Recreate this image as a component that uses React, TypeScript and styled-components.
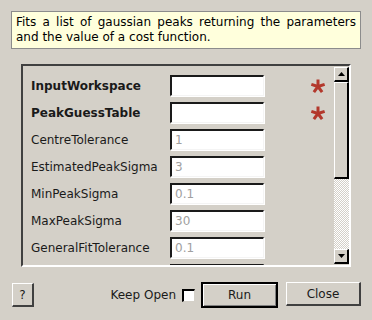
import React from 'react';
import styled, { createGlobalStyle } from 'styled-components';

const GlobalStyle = createGlobalStyle`
  html, body {
    margin: 0;
    padding: 0;
    background: #d4d0c8;
  }
  #root {
    width: 372px;
    height: 320px;
  }
`;

const Dialog = styled.div`
  width: 372px;
  height: 320px;
  box-sizing: border-box;
  padding: 11px 11px 0 11px;
  display: flex;
  flex-direction: column;
  background: #d4d0c8;
  font-family: 'DejaVu Sans', sans-serif;
  font-size: 12px;
  color: #000;
`;

const Description = styled.div`
  box-sizing: border-box;
  height: 38px;
  padding: 3px 4px 0 4px;
  background: #ffffdc;
  border: 1px solid #8c8c8c;
  line-height: 15px;
  text-align: justify;
  text-align-last: left;
`;

const ScrollFrame = styled.div`
  box-sizing: border-box;
  margin: 15px 0 0 10px;
  width: 330px;
  height: 203px;
  border-style: solid;
  border-width: 2px;
  border-color: #404040 #ffffff #ffffff #404040;
  box-shadow: inset -1px -1px 0 #d4d0c8;
  display: flex;
  overflow: hidden;
`;

const Content = styled.div`
  flex: 1;
  padding: 9px 0 0 8px;
  display: grid;
  grid-template-columns: 139px 94px 1fr;
  grid-auto-rows: 21px;
  row-gap: 6px;
  align-items: center;
  align-content: start;
  overflow: hidden;
`;

const Label = styled.div<{ $required?: boolean }>`
  font-weight: ${p => (p.$required ? 'bold' : 'normal')};
  color: #1a1a1a;
  white-space: nowrap;
`;

const Field = styled.div`
  box-sizing: border-box;
  height: 21px;
  background: #fff;
  border-style: solid;
  border-width: 2px 1px 1px 2px;
  border-color: #1a1a1a #f4f4f4 #f4f4f4 #1a1a1a;
  box-shadow: 1px 1px 0 #ffffff;
  padding-left: 3px;
  line-height: 18px;
  color: #a0a0a0;
`;

const Marker = styled.div`
  display: flex;
  justify-content: flex-end;
  padding-right: 8px;
  height: 21px;
  align-items: center;
`;

const ScrollBar = styled.div`
  width: 15px;
  margin: 1px 0 1px 0;
  display: flex;
  flex-direction: column;
`;

const ScrollButton = styled.div`
  box-sizing: border-box;
  height: 15px;
  background: #d4d0c8;
  border-style: solid;
  border-width: 1px 2px 2px 1px;
  border-color: #ffffff #000 #000 #ffffff;
  display: flex;
  align-items: center;
  justify-content: center;
`;

const Thumb = styled.div`
  box-sizing: border-box;
  height: 97px;
  background: #d4d0c8;
  border-style: solid;
  border-width: 1px 2px 2px 1px;
  border-color: #ffffff #000 #000 #ffffff;
`;

const Track = styled.div`
  flex: 1;
  background-color: #d4d0c8;
  background-image: repeating-conic-gradient(#ffffff 0 25%, #d4d0c8 0 50%);
  background-size: 2px 2px;
`;

const Footer = styled.div`
  margin-top: 15px;
  display: flex;
  align-items: center;
  height: 26px;
`;

const Button = styled.button<{ $default?: boolean; $w: number }>`
  box-sizing: border-box;
  width: ${p => p.$w}px;
  height: ${p => (p.$default ? 26 : 24)}px;
  background: #d4d0c8;
  font-family: 'DejaVu Sans', sans-serif;
  font-size: 12px;
  line-height: 14px;
  color: #1a1a1a;
  padding: 0;
  margin: 0;
  border-style: solid;
  border-width: ${p => (p.$default ? '2px' : '1px 2px 2px 1px')};
  border-color: ${p => (p.$default ? '#000' : '#ffffff #404040 #404040 #ffffff')};
  box-shadow: ${p => (p.$default ? 'inset 1px 1px 0 #fff, inset -1px -1px 0 #808080' : 'none')};
`;

const HelpButton = styled(Button)`
  margin-left: 1px;
`;

const KeepOpen = styled.label`
  margin-left: auto;
  display: flex;
  align-items: center;
  gap: 6px;
  color: #1a1a1a;
  line-height: 16px;
`;

const Check = styled.span`
  box-sizing: border-box;
  width: 13px;
  height: 13px;
  background: #fff;
  border-style: solid;
  border-width: 2px 1px 1px 2px;
  border-color: #000 #d4d0c8 #d4d0c8 #000;
`;

const Buttons = styled.div`
  display: flex;
  gap: 8px;
  margin-left: 6px;
`;

const Asterisk = () => (
  <svg width="16" height="16" viewBox="0 0 16 16">
    {[-90, -18, 54, 126, 198].map(a => {
      const r = (a * Math.PI) / 180;
      return (
        <line
          key={a}
          x1="8"
          y1="8.5"
          x2={8 + Math.cos(r) * 7}
          y2={8.5 + Math.sin(r) * 7}
          stroke="#b3382c"
          strokeWidth="3"
          strokeLinecap="butt"
        />
      );
    })}
  </svg>
);

const Arrow = ({ up }: { up?: boolean }) => (
  <svg width="7" height="4" viewBox="0 0 7 4">
    <polygon points={up ? '3.5,0 7,4 0,4' : '0,0 7,0 3.5,4'} fill="#000" />
  </svg>
);

const rows = [
  { name: 'InputWorkspace', value: '', required: true },
  { name: 'PeakGuessTable', value: '', required: true },
  { name: 'CentreTolerance', value: '1' },
  { name: 'EstimatedPeakSigma', value: '3' },
  { name: 'MinPeakSigma', value: '0.1' },
  { name: 'MaxPeakSigma', value: '30' },
  { name: 'GeneralFitTolerance', value: '0.1' },
  { name: '', value: '' },
];

export default function App() {
  return (
    <>
      <GlobalStyle />
      <Dialog>
        <Description>
          Fits a list of gaussian peaks returning the parameters and the value of a cost function.
        </Description>
        <ScrollFrame>
          <Content>
            {rows.map((r, i) => (
              <React.Fragment key={i}>
                <Label $required={r.required}>{r.name}</Label>
                <Field>{r.value}</Field>
                <Marker>{r.required && <Asterisk />}</Marker>
              </React.Fragment>
            ))}
          </Content>
          <ScrollBar>
            <ScrollButton>
              <Arrow up />
            </ScrollButton>
            <Thumb />
            <Track />
            <ScrollButton>
              <Arrow />
            </ScrollButton>
          </ScrollBar>
        </ScrollFrame>
        <Footer>
          <HelpButton $w={22}>?</HelpButton>
          <KeepOpen>
            Keep Open
            <Check />
          </KeepOpen>
          <Buttons>
            <Button $default $w={77}>Run</Button>
            <Button $w={75}>Close</Button>
          </Buttons>
        </Footer>
      </Dialog>
    </>
  );
}
